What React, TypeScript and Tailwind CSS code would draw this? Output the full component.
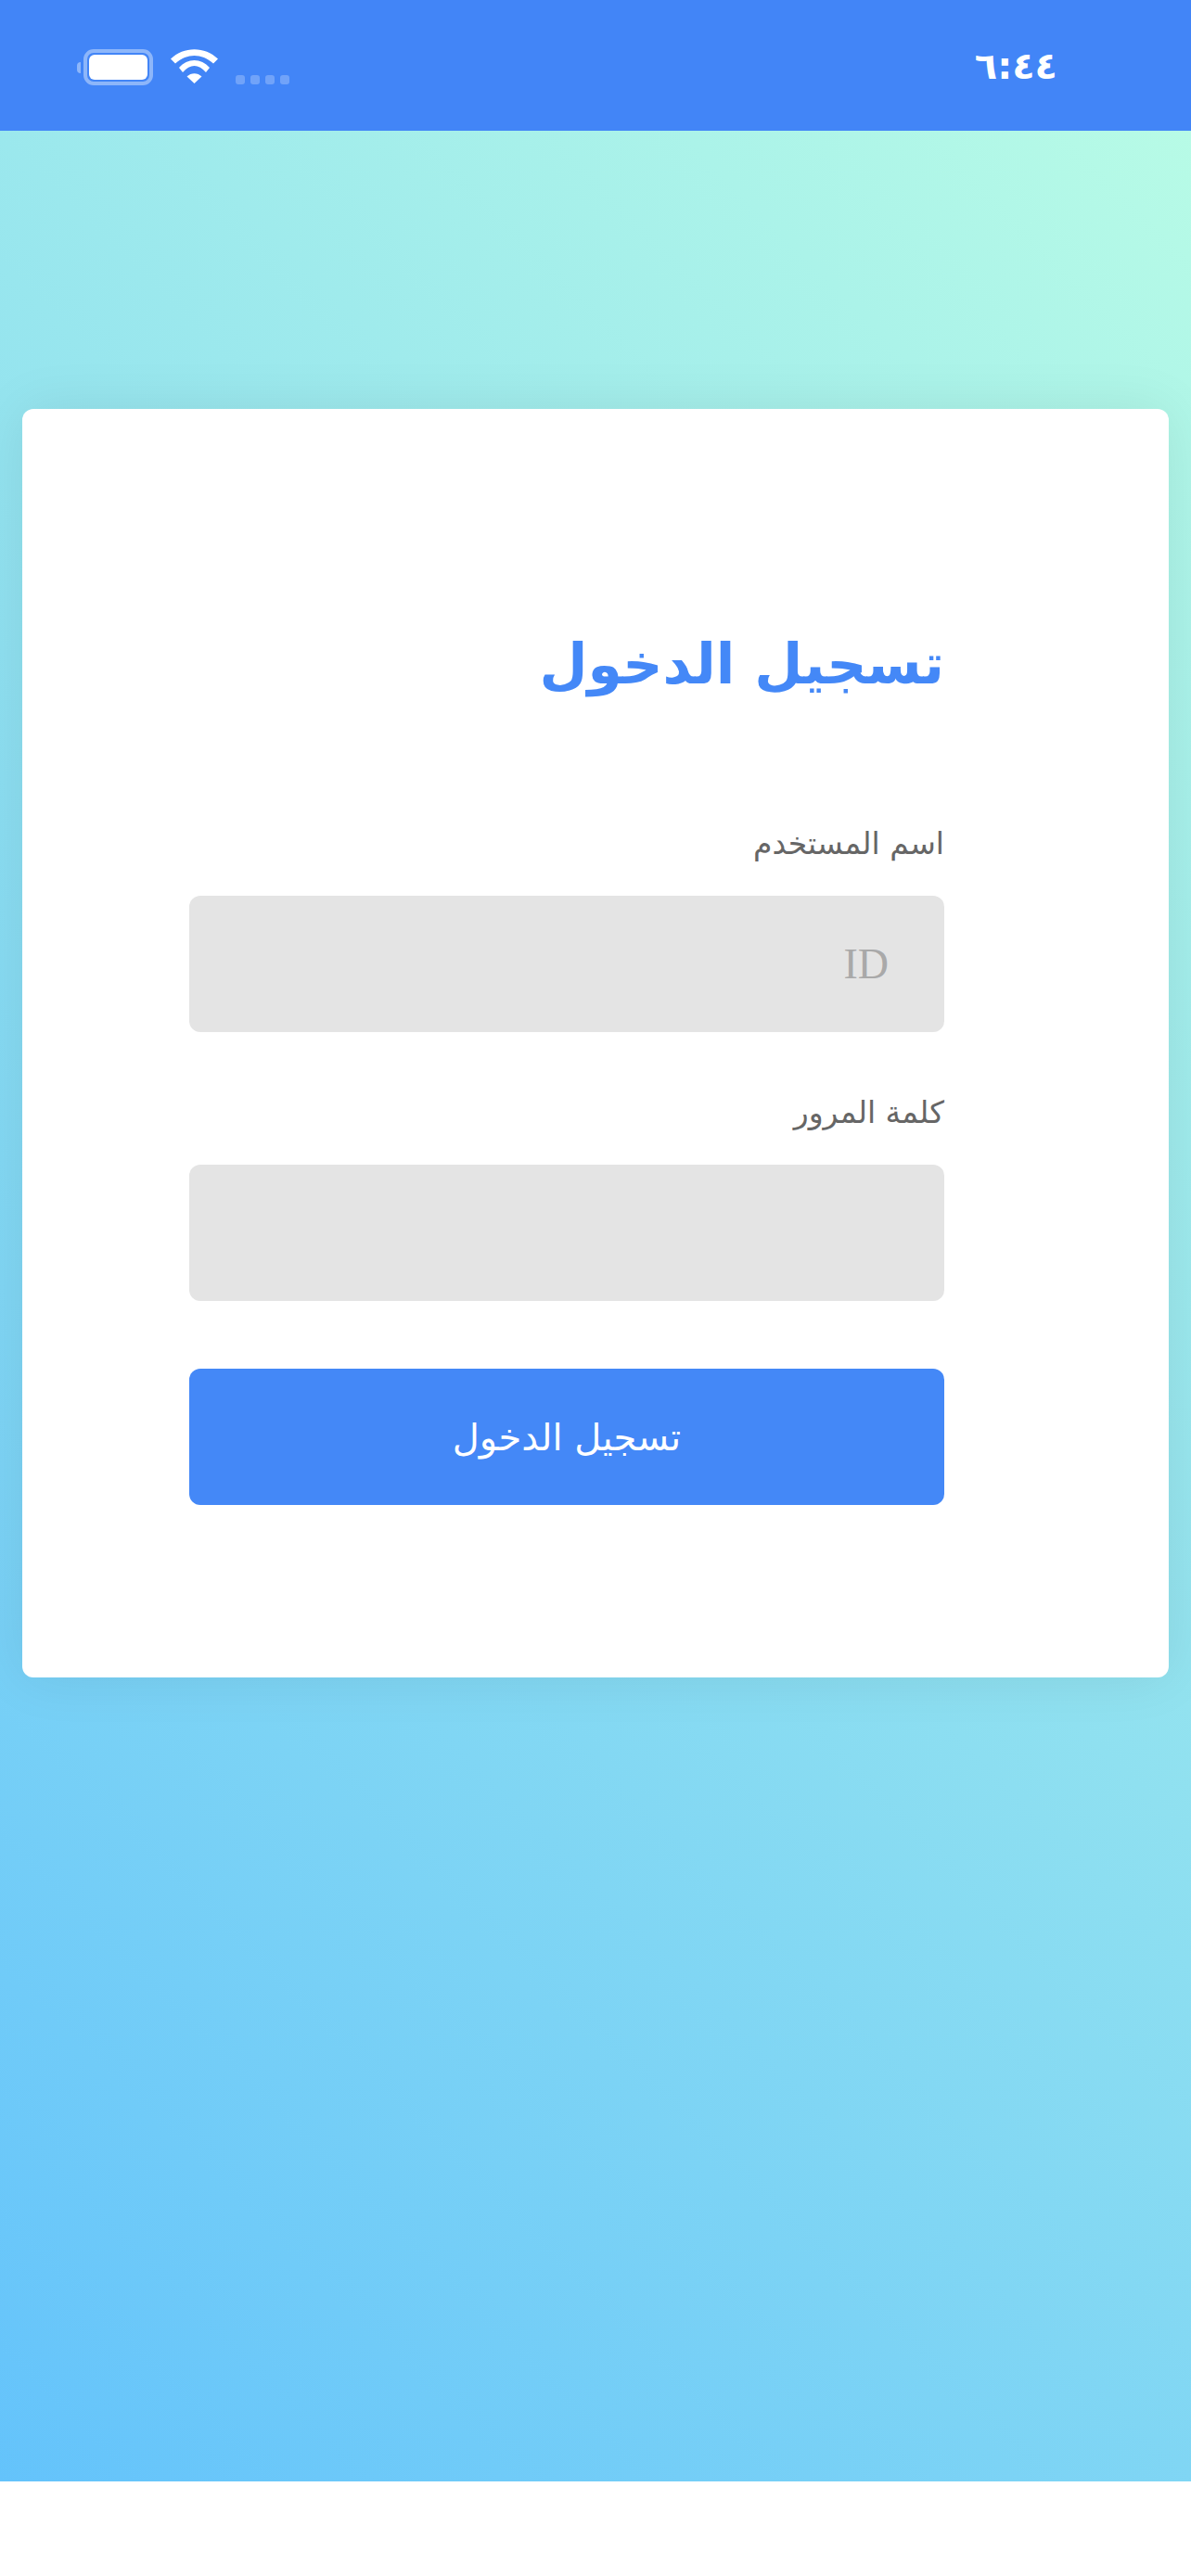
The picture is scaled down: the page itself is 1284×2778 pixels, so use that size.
function WifiIcon() {
  return (
    <svg width="51" height="37" viewBox="0 0 51 37" fill="white">
      <path d="M0 10.5C14-3.3 37-3.3 51 10.5L46 15.5C33 4.2 18 4.2 5 15.5Z" />
      <path d="M9 20C18 9.3 33 9.3 42 20L38 25C30 15.7 21 15.7 13 25Z" />
      <path d="M17.5 29.5C22 25 29 25 33.5 29.5L25.5 37Z" />
    </svg>
  );
}

function Battery() {
  return (
    <div className="flex items-center gap-[3px]">
      <div className="h-[12px] w-[4px] rounded-l-full bg-white/40" />
      <div className="flex h-[39px] w-[75px] items-center justify-center rounded-[11px] border-[4px] border-white/40">
        <div className="h-[27px] w-[63px] rounded-[6px] bg-white" />
      </div>
    </div>
  );
}

function StatusBar() {
  return (
    <div className="flex h-[141px] items-start justify-between bg-[#4285f7] pt-[53px] pr-[144px] pl-[83px]">
      <div className="flex items-start">
        <Battery />
        <div className="ml-[19px]">
          <WifiIcon />
        </div>
        <div className="mt-[28px] ml-[19px] flex gap-[6px]">
          <div className="size-[10px] rounded-[3px] bg-white/25" />
          <div className="size-[10px] rounded-[3px] bg-white/25" />
          <div className="size-[10px] rounded-[3px] bg-white/25" />
          <div className="size-[10px] rounded-[3px] bg-white/25" />
        </div>
      </div>
      <span className="text-[40px] leading-[36px] font-bold text-white">٦:٤٤</span>
    </div>
  );
}

function Field({ label, placeholder }: { label: string; placeholder?: string }) {
  return (
    <div>
      <div className="h-[54px] text-right text-[33px] leading-[48px] text-[#666666]" dir="rtl">
        {label}
      </div>
      <div className="mt-[26px] flex h-[147px] items-center justify-end rounded-[12px] bg-[#e4e4e4] pr-[60px] font-['Liberation_Serif',serif] text-[46px] text-[#a9a9a9]">
        {placeholder}
      </div>
    </div>
  );
}

export default function App() {
  return (
    <div className="flex h-[2778px] flex-col bg-white font-['DejaVu_Sans',sans-serif]">
      <StatusBar />
      <div className="h-[2535px] bg-[linear-gradient(45deg,#64c3fb,#b7fbe6)] px-[24px] pt-[300px]">
        <div className="h-[1368px] rounded-[12px] bg-white pt-[230px] pr-[242px] pl-[180px] shadow-[0_0_60px_rgba(0,0,0,0.08)]">
          <h1 className="h-[90px] text-right text-[60px] leading-[90px] font-bold text-[#4488f7]" dir="rtl">
            تسجيل الدخول
          </h1>
          <div className="mt-[125px] flex flex-col gap-[63px]">
            <Field label="اسم المستخدم" placeholder="ID" />
            <Field label="كلمة المرور" />
          </div>
          <button className="mt-[73px] flex h-[147px] w-full items-center justify-center rounded-[12px] bg-[#4488f7] text-[40px] text-white">
            تسجيل الدخول
          </button>
        </div>
      </div>
    </div>
  );
}
